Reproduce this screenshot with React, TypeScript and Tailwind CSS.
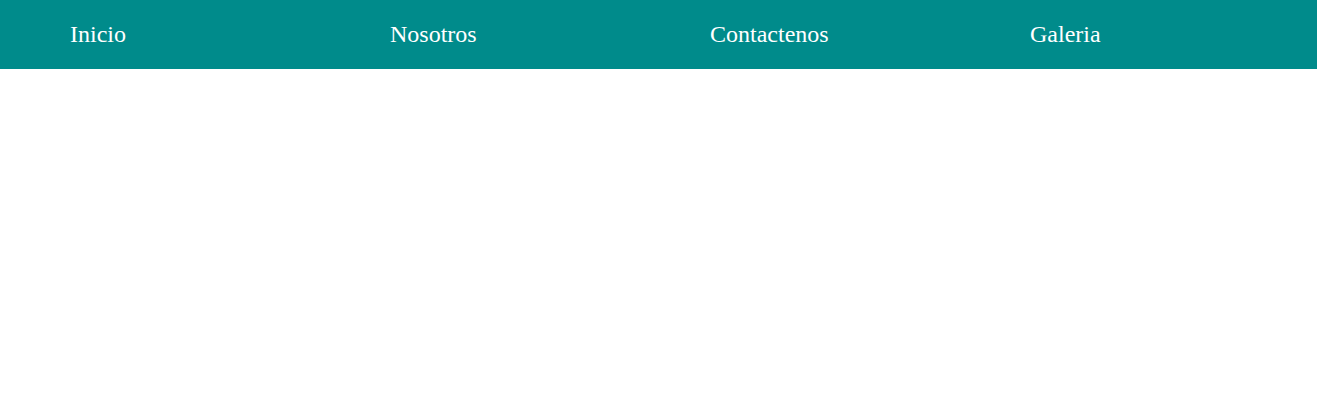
export default function App() {
  const links = ['Inicio', 'Nosotros', 'Contactenos', 'Galeria'];

  return (
    <div className="min-h-[411px] bg-white overflow-hidden" style={{ fontFamily: '"Liberation Serif", "Times New Roman", serif' }}>
      <nav className="bg-[#008b8b] h-[69px] flex items-center pl-[70px] pb-[2px]">
        {links.map((link) => (
          <a key={link} href="#" className="w-[320px] shrink-0 text-[24px] leading-none text-white">
            {link}
          </a>
        ))}
      </nav>
    </div>
  );
}
